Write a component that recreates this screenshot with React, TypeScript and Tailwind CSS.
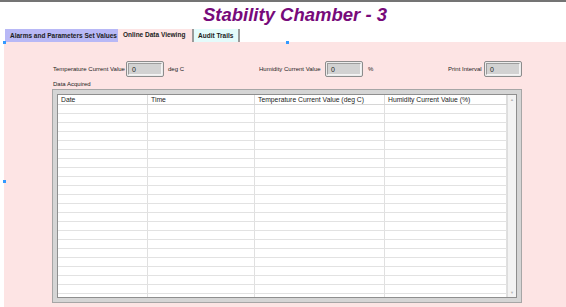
import React from "react";

const columns = [
  { label: "Date", width: "w-[90px]" },
  { label: "Time", width: "w-[107px]" },
  { label: "Temperature Current Value (deg C)", width: "w-[130px]" },
  { label: "Humidity Current Value (%)", width: "flex-1" },
];

const rows = Array.from({ length: 22 }, (_, i) => i);

function ValueBox({ value }: { value: string }) {
  return (
    <div className="h-[16px] w-[38px] shrink-0 rounded-[2px] border border-[#8c8c8c] bg-[#ececec] p-px">
      <div className="h-full w-full border border-t-[#9c9c9c] border-l-[#9c9c9c] border-r-[#f4f4f4] border-b-[#f4f4f4] bg-[#d2d2d2] pl-[3px] text-[7px] leading-[11px] text-[#222]">
        {value}
      </div>
    </div>
  );
}

function Handle({ className }: { className: string }) {
  return <div className={`absolute h-[3px] w-[3px] bg-[#3399ff] ${className}`} />;
}

export default function App() {
  return (
    <div className="relative flex h-[307px] w-[566px] flex-col overflow-hidden bg-white font-['Liberation_Sans',Arial,sans-serif] text-[#1c1c1c]">
      <div className="h-[2px] shrink-0 bg-[#747474]" />
      <div className="h-[27px] shrink-0 whitespace-nowrap pl-[203px] pt-[2px] text-[18.5px] font-bold italic leading-[21px] text-[#770a7a]">
        Stability Chamber - 3
      </div>

      {/* tab strip */}
      <div className="flex h-[13px] shrink-0 whitespace-nowrap pl-[5px] text-[6.5px] font-bold leading-[12px]">
        <div className="w-[113px] bg-[#b8b8f6] pl-[5px] pt-px">Alarms and Parameters Set Values</div>
        <div className="w-[76px] border-r-2 border-[#9a9a9a] bg-[#fde4e4] pl-[5px]">Online Data Viewing</div>
        <div className="w-[46px] border-r-2 border-[#9a9a9a] bg-[#e4fbfb] pl-[4px] pt-px">Audit Trails</div>
      </div>

      <div className="ml-[4px] flex flex-1 flex-col whitespace-nowrap bg-[#fde4e4] pl-[48px] pt-[19px] text-[6px]">
        {/* current values */}
        <div className="flex h-[16px] items-center pl-px">
          <div className="flex w-[206px] items-center">
            <span className="w-[73px]">Temperature Current Value</span>
            <ValueBox value="0" />
            <span className="ml-[4px]">deg C</span>
          </div>
          <div className="flex w-[189px] items-center">
            <span className="w-[66px]">Humidity Current Value</span>
            <ValueBox value="0" />
            <span className="ml-[5px]">%</span>
          </div>
          <div className="flex items-center">
            <span className="w-[36px]">Print Interval</span>
            <ValueBox value="0" />
          </div>
        </div>

        <div className="mt-[3px] h-[8px] pl-px leading-[8px]">Data Acquired</div>

        {/* table */}
        <div className="mt-px h-[214px] w-[470px] border border-[#a6a6a6] bg-[#d5d5d5] p-[4px] text-[6.8px]">
          <div className="flex h-full border border-[#8e8e8e] bg-white">
            <div className="flex flex-1 flex-col overflow-hidden">
              <div className="flex h-[10px] shrink-0 border-b border-[#d6d6d6] leading-[9px]">
                {columns.map((c) => (
                  <div key={c.label} className={`${c.width} border-r border-[#dcdcdc] pl-[3px]`}>
                    {c.label}
                  </div>
                ))}
              </div>
              {rows.map((r) => (
                <div key={r} className="flex h-[9px] shrink-0 border-b border-[#e2e2e2]">
                  {columns.map((c) => (
                    <div key={c.label} className={`${c.width} border-r border-[#e0e0e0]`} />
                  ))}
                </div>
              ))}
            </div>
            <div className="flex w-[9px] flex-col items-center justify-between border-l border-[#dddddd] bg-[#f3f3f3] py-[2px] text-[4px] leading-[5px] text-[#b5b5b5]">
              <span>▲</span>
              <span>▼</span>
            </div>
          </div>
        </div>
      </div>

      <Handle className="left-[3px] top-[41px]" />
      <Handle className="left-[286px] top-[41px]" />
      <Handle className="left-[3px] top-[180px]" />
    </div>
  );
}
